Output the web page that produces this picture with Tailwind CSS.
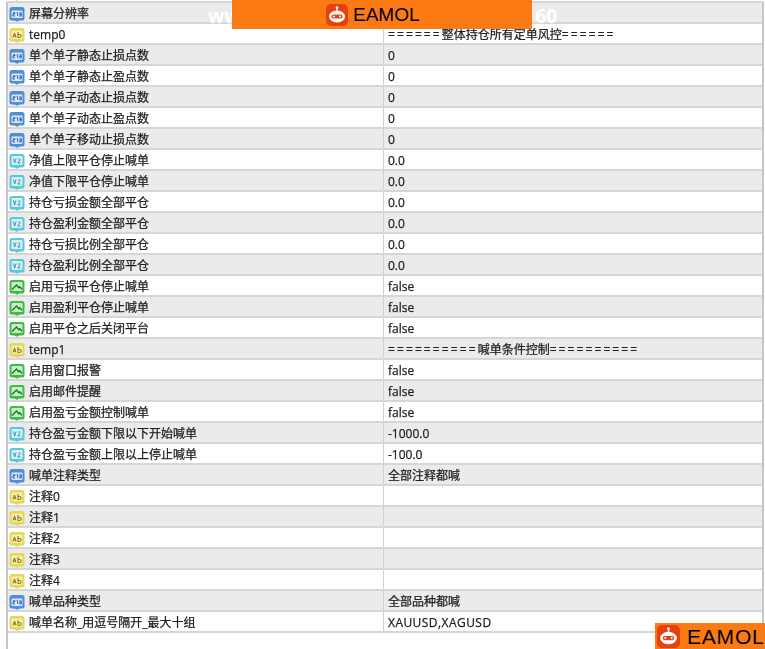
<!DOCTYPE html>
<html><head><meta charset="utf-8"><script src="https://cdn.jsdelivr.net/npm/@tailwindcss/browser@4"></script></head>
<body class="bg-white">
<div class="relative w-[765px] h-[649px] overflow-hidden bg-white font-['Open_Sans','Noto_Sans_CJK_SC',sans-serif] text-[12px] text-[#111] [-webkit-text-stroke:0.25px_#333]">
<svg width="0" height="0" class="absolute">
<defs>
<symbol id="int" viewBox="0 0 16 16"><path d="M3 1h10a2.500 2.500 0 012.500 2.500v9a2 2 0 01-2 2h-3L8 15.800 5.500 14.500h-3a2 2 0 01-2-2v-9A2.500 2.500 0 013 1z" fill="#4d8fd8"/><rect x="2.500" y="4.500" width="11" height="7.500" rx="1" fill="#d8e8f8"/><path d="M4 6.800h2v1H4v2.200h2M7.500 6.800h1.200V10M10.300 6.800h1.900v3.200h-1.900M10.300 8.400h1.900" fill="none" stroke="#1c4f96" stroke-width=".9"/></symbol>
<symbol id="str" viewBox="0 0 16 16"><path d="M3 1h10a2.500 2.500 0 012.500 2.500v9a2 2 0 01-2 2h-3L8 15.800 5.500 14.500h-3a2 2 0 01-2-2v-9A2.500 2.500 0 013 1z" fill="#e6d65e"/><rect x="2.500" y="3.500" width="11" height="8.500" rx="1" fill="#f7f0a4"/><path d="M4 10.500l1.500-4.500 1.500 4.500M4.600 9h1.800M9 5v5.500h1.700a1.400 1.400 0 000-3H9" fill="none" stroke="#6f6012" stroke-width=".9"/></symbol>
<symbol id="dbl" viewBox="0 0 16 16"><path d="M3 1h10a2.500 2.500 0 012.500 2.500v9a2 2 0 01-2 2h-3L8 15.800 5.500 14.500h-3a2 2 0 01-2-2v-9A2.500 2.500 0 013 1z" fill="#5cc6da"/><rect x="2.500" y="3" width="11" height="9" rx="1" fill="#d5f1f5"/><path d="M4.500 5.500l1.200 4.500 1.300-4.500M8.800 10h2.700M9 6.500l1-1 1.200 1-2.400 3.500" fill="none" stroke="#2a8da5" stroke-width=".9"/></symbol>
<symbol id="bool" viewBox="0 0 16 16"><path d="M3 1h10a2.500 2.500 0 012.500 2.500v9a2 2 0 01-2 2h-3L8 15.800 5.500 14.500h-3a2 2 0 01-2-2v-9A2.500 2.500 0 013 1z" fill="#3fbb4a"/><rect x="2.500" y="3" width="11" height="9" rx="1" fill="#c9f0c4"/><path d="M3 10.500L7.500 6l2.200 2.700 1-1 2.300 2.500" fill="none" stroke="#157a25" stroke-width="1.400"/></symbol>
</defs>
</svg>
<div class="blur-[0.45px]">
<div class="h-[3px] border-b-2 border-[#d6d6d6] ml-[6px] mr-[1px] pl-[3px] overflow-hidden"><svg class="w-[16px] h-[16px] -mt-[15px]"><use href="#str"/></svg></div>
<div class="ml-[6px] mr-[1px] border-l-2 border-r-2 border-[#c6c6c6] h-[646px] [&>div]:h-[21px] [&>div]:flex [&>div]:border-b-2 [&>div]:border-[#d6d6d6] [&>div>div]:flex [&>div>div]:items-center [&>div>div]:pt-[2px] [&>div>div:first-child]:w-[376px] [&>div>div:first-child]:border-r [&>div>div:first-child]:border-[#d0d0d0] [&>div>div:first-child]:gap-[4px] [&>div>div:first-child]:pl-[1px] [&>div>div:last-child]:flex-1 [&>div>div:last-child]:pl-[4px] [&_svg]:w-[16px] [&_svg]:h-[16px] [&_svg]:shrink-0">
<div class="bg-[#ebebeb]"><div><svg><use href="#int"/></svg><span>屏幕分辨率</span></div><div></div></div>
<div class="bg-white"><div><svg><use href="#str"/></svg><span>temp0</span></div><div><span class="tracking-[2.1px]">======</span><span>整体持仓所有定单风控</span><span class="tracking-[2.1px]">======</span></div></div>
<div class="bg-[#ebebeb]"><div><svg><use href="#int"/></svg><span>单个单子静态止损点数</span></div><div>0</div></div>
<div class="bg-white"><div><svg><use href="#int"/></svg><span>单个单子静态止盈点数</span></div><div>0</div></div>
<div class="bg-[#ebebeb]"><div><svg><use href="#int"/></svg><span>单个单子动态止损点数</span></div><div>0</div></div>
<div class="bg-white"><div><svg><use href="#int"/></svg><span>单个单子动态止盈点数</span></div><div>0</div></div>
<div class="bg-[#ebebeb]"><div><svg><use href="#int"/></svg><span>单个单子移动止损点数</span></div><div>0</div></div>
<div class="bg-white"><div><svg><use href="#dbl"/></svg><span>净值上限平仓停止喊单</span></div><div>0.0</div></div>
<div class="bg-[#ebebeb]"><div><svg><use href="#dbl"/></svg><span>净值下限平仓停止喊单</span></div><div>0.0</div></div>
<div class="bg-white"><div><svg><use href="#dbl"/></svg><span>持仓亏损金额全部平仓</span></div><div>0.0</div></div>
<div class="bg-[#ebebeb]"><div><svg><use href="#dbl"/></svg><span>持仓盈利金额全部平仓</span></div><div>0.0</div></div>
<div class="bg-white"><div><svg><use href="#dbl"/></svg><span>持仓亏损比例全部平仓</span></div><div>0.0</div></div>
<div class="bg-[#ebebeb]"><div><svg><use href="#dbl"/></svg><span>持仓盈利比例全部平仓</span></div><div>0.0</div></div>
<div class="bg-white"><div><svg><use href="#bool"/></svg><span>启用亏损平仓停止喊单</span></div><div>false</div></div>
<div class="bg-[#ebebeb]"><div><svg><use href="#bool"/></svg><span>启用盈利平仓停止喊单</span></div><div>false</div></div>
<div class="bg-white"><div><svg><use href="#bool"/></svg><span>启用平仓之后关闭平台</span></div><div>false</div></div>
<div class="bg-[#ebebeb]"><div><svg><use href="#str"/></svg><span>temp1</span></div><div><span class="tracking-[2.1px]">==========</span><span>喊单条件控制</span><span class="tracking-[2.1px]">==========</span></div></div>
<div class="bg-white"><div><svg><use href="#bool"/></svg><span>启用窗口报警</span></div><div>false</div></div>
<div class="bg-[#ebebeb]"><div><svg><use href="#bool"/></svg><span>启用邮件提醒</span></div><div>false</div></div>
<div class="bg-white"><div><svg><use href="#bool"/></svg><span>启用盈亏金额控制喊单</span></div><div>false</div></div>
<div class="bg-[#ebebeb]"><div><svg><use href="#dbl"/></svg><span>持仓盈亏金额下限以下开始喊单</span></div><div>-1000.0</div></div>
<div class="bg-white"><div><svg><use href="#dbl"/></svg><span>持仓盈亏金额上限以上停止喊单</span></div><div>-100.0</div></div>
<div class="bg-[#ebebeb]"><div><svg><use href="#int"/></svg><span>喊单注释类型</span></div><div>全部注释都喊</div></div>
<div class="bg-white"><div><svg><use href="#str"/></svg><span>注释0</span></div><div></div></div>
<div class="bg-[#ebebeb]"><div><svg><use href="#str"/></svg><span>注释1</span></div><div></div></div>
<div class="bg-white"><div><svg><use href="#str"/></svg><span>注释2</span></div><div></div></div>
<div class="bg-[#ebebeb]"><div><svg><use href="#str"/></svg><span>注释3</span></div><div></div></div>
<div class="bg-white"><div><svg><use href="#str"/></svg><span>注释4</span></div><div></div></div>
<div class="bg-[#ebebeb]"><div><svg><use href="#int"/></svg><span>喊单品种类型</span></div><div>全部品种都喊</div></div>
<div class="bg-white"><div><svg><use href="#str"/></svg><span>喊单名称_用逗号隔开_最大十组</span></div><div><span class="tracking-[0.45px]">XAUUSD,XAGUSD</span></div></div>
</div>
</div>
<div class="absolute left-[208px] top-[7px] w-[349px] flex justify-between text-[19px] leading-none font-bold text-white [-webkit-text-stroke:0]"><span>www</span><span>60</span></div>
<div class="absolute left-[232px] top-0 w-[300px] h-[29px] bg-[#fb7a14] flex items-center pl-[94px] gap-[5px] [-webkit-text-stroke:0]">
<svg width="22" height="22" viewBox="0 0 22 22"><rect width="22" height="22" rx="5" fill="#e8410f"/><ellipse cx="11" cy="12.500" rx="8" ry="6" fill="#fff"/><path d="M11 6.500V3.500" stroke="#fff" stroke-width="1.500"/><circle cx="11" cy="3.500" r="1.300" fill="#fff"/><rect x="5.500" y="10.500" width="11" height="4" rx="2" fill="#e8410f"/><circle cx="8" cy="12.500" r="1" fill="#fff"/><circle cx="14" cy="12.500" r="1" fill="#fff"/></svg>
<span class="font-['Liberation_Sans',sans-serif] text-[19px] leading-none text-black">EAMOL</span>
</div>
<div class="absolute left-[655px] top-[623px] w-[110px] h-[26px] bg-[#fb7a14] flex items-center pl-[2px] gap-[7px] [-webkit-text-stroke:0]">
<svg width="23" height="23" viewBox="0 0 22 22"><rect width="22" height="22" rx="5" fill="#e8410f"/><ellipse cx="11" cy="12.500" rx="8" ry="6" fill="#fff"/><path d="M11 6.500V3.500" stroke="#fff" stroke-width="1.500"/><circle cx="11" cy="3.500" r="1.300" fill="#fff"/><rect x="5.500" y="10.500" width="11" height="4" rx="2" fill="#e8410f"/><circle cx="8" cy="12.500" r="1" fill="#fff"/><circle cx="14" cy="12.500" r="1" fill="#fff"/></svg>
<span class="font-['Liberation_Sans',sans-serif] text-[21px] tracking-[0.8px] leading-none text-black">EAMOL</span>
</div>
</div>
</body></html>
